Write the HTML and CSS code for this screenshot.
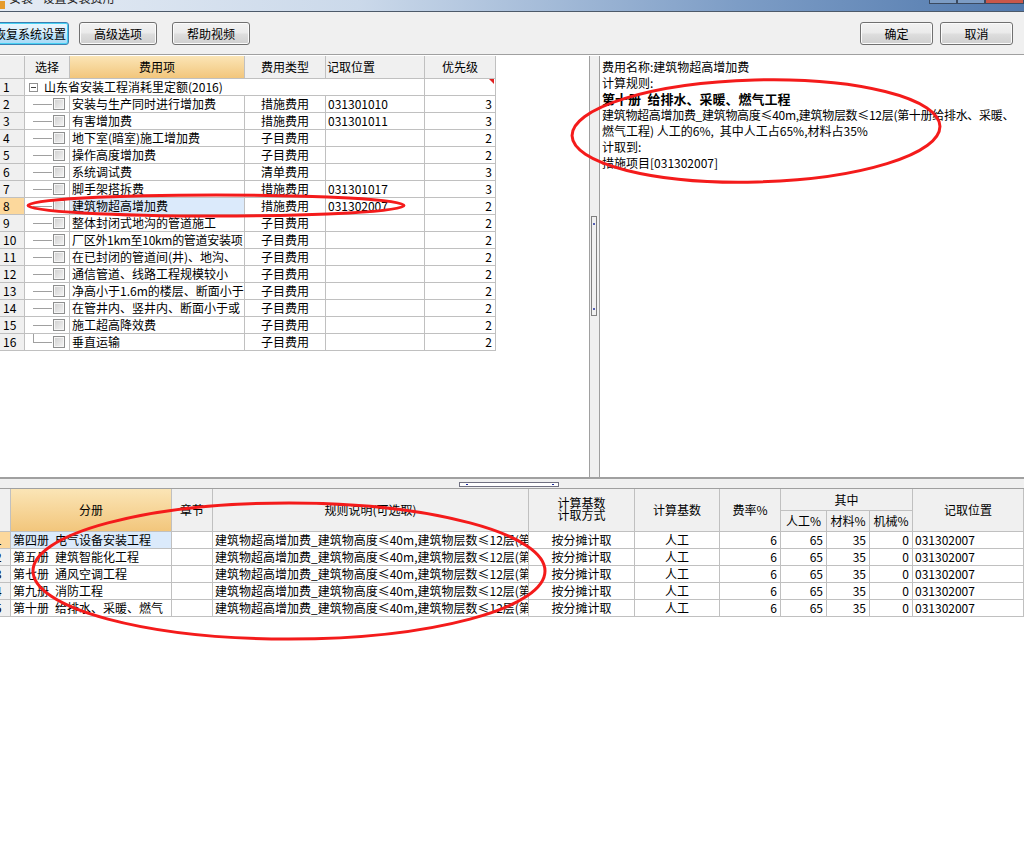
FILE: index.html
```html
<!DOCTYPE html>
<html lang="zh-CN">

<head>
    <meta charset="UTF-8" />
    <title>设置安装费用</title>
    <link rel="stylesheet" href="styles.css">
</head>

<body>
    <div class="titlebar">
        <span class="app-icon"></span>
        <span class="title-text">安装 - 设置安装费用</span>
        <div class="caption-btns"><span></span><span></span><span class="close"></span></div>
    </div>

    <div class="toolbar">
        <div class="btn btn-focus btn-first">恢复系统设置</div>
        <div class="btn">高级选项</div>
        <div class="btn">帮助视频</div>
        <div class="spacer"></div>
        <div class="btn btn-sm">确定</div>
        <div class="btn btn-sm">取消</div>
    </div>

    <div class="main">
        <div class="left-pane">
            <div class="top-grid">
                <div class="c h"></div>
                <div class="c h">选择</div>
                <div class="c h orange">费用项</div>
                <div class="c h">费用类型</div>
                <div class="c h left">记取位置</div>
                <div class="c h">优先级</div>

                <div class="c n">1</div>
                <div class="c merged"><span class="minus"></span>山东省安装工程消耗里定额(2016)</div>
                <div class="c rt flag"></div>

                <div class="c n">2</div>
                <div class="c tree"><span class="branch"></span><span class="chk"></span></div>
                <div class="c">安装与生产同时进行增加费</div>
                <div class="c ctr">措施费用</div>
                <div class="c">031301010</div>
                <div class="c rt">3</div>

                <div class="c n">3</div>
                <div class="c tree"><span class="branch"></span><span class="chk"></span></div>
                <div class="c">有害增加费</div>
                <div class="c ctr">措施费用</div>
                <div class="c">031301011</div>
                <div class="c rt">3</div>

                <div class="c n">4</div>
                <div class="c tree"><span class="branch"></span><span class="chk"></span></div>
                <div class="c">地下室(暗室)施工增加费</div>
                <div class="c ctr">子目费用</div>
                <div class="c"></div>
                <div class="c rt">2</div>

                <div class="c n">5</div>
                <div class="c tree"><span class="branch"></span><span class="chk"></span></div>
                <div class="c">操作高度增加费</div>
                <div class="c ctr">子目费用</div>
                <div class="c"></div>
                <div class="c rt">2</div>

                <div class="c n">6</div>
                <div class="c tree"><span class="branch"></span><span class="chk"></span></div>
                <div class="c">系统调试费</div>
                <div class="c ctr">清单费用</div>
                <div class="c"></div>
                <div class="c rt">3</div>

                <div class="c n">7</div>
                <div class="c tree"><span class="branch"></span><span class="chk"></span></div>
                <div class="c">脚手架搭拆费</div>
                <div class="c ctr">措施费用</div>
                <div class="c">031301017</div>
                <div class="c rt">3</div>

                <div class="c n sel">8</div>
                <div class="c tree"><span class="branch"></span><span class="chk"></span></div>
                <div class="c cur">建筑物超高增加费</div>
                <div class="c ctr">措施费用</div>
                <div class="c">031302007</div>
                <div class="c rt">2</div>

                <div class="c n">9</div>
                <div class="c tree"><span class="branch"></span><span class="chk"></span></div>
                <div class="c">整体封闭式地沟的管道施工</div>
                <div class="c ctr">子目费用</div>
                <div class="c"></div>
                <div class="c rt">2</div>

                <div class="c n">10</div>
                <div class="c tree"><span class="branch"></span><span class="chk"></span></div>
                <div class="c tight">厂区外1km至10km的管道安装项</div>
                <div class="c ctr">子目费用</div>
                <div class="c"></div>
                <div class="c rt">2</div>

                <div class="c n">11</div>
                <div class="c tree"><span class="branch"></span><span class="chk"></span></div>
                <div class="c">在已封闭的管道间(井)、地沟、</div>
                <div class="c ctr">子目费用</div>
                <div class="c"></div>
                <div class="c rt">2</div>

                <div class="c n">12</div>
                <div class="c tree"><span class="branch"></span><span class="chk"></span></div>
                <div class="c">通信管道、线路工程规模较小</div>
                <div class="c ctr">子目费用</div>
                <div class="c"></div>
                <div class="c rt">2</div>

                <div class="c n">13</div>
                <div class="c tree"><span class="branch"></span><span class="chk"></span></div>
                <div class="c">净高小于1.6m的楼层、断面小于</div>
                <div class="c ctr">子目费用</div>
                <div class="c"></div>
                <div class="c rt">2</div>

                <div class="c n">14</div>
                <div class="c tree"><span class="branch"></span><span class="chk"></span></div>
                <div class="c">在管井内、竖井内、断面小于或</div>
                <div class="c ctr">子目费用</div>
                <div class="c"></div>
                <div class="c rt">2</div>

                <div class="c n">15</div>
                <div class="c tree"><span class="branch"></span><span class="chk"></span></div>
                <div class="c">施工超高降效费</div>
                <div class="c ctr">子目费用</div>
                <div class="c"></div>
                <div class="c rt">2</div>

                <div class="c n">16</div>
                <div class="c tree"><span class="branch last"></span><span class="chk"></span></div>
                <div class="c">垂直运输</div>
                <div class="c ctr">子目费用</div>
                <div class="c"></div>
                <div class="c rt">2</div>
            </div>
        </div>

        <div class="vsplit"><span class="vthumb"></span></div>

        <div class="right-pane">
            <div>费用名称:建筑物超高增加费</div>
            <div>计算规则:</div>
            <div class="rule-title">第十册&ensp;给排水、采暖、燃气工程</div>
            <div class="tight">建筑物超高增加费_建筑物高度≤40m,建筑物层数≤12层(第十册给排水、采暖、</div>
            <div>燃气工程) 人工的6%,&ensp;其中人工占65%,材料占35%</div>
            <div>计取到:</div>
            <div>措施项目[031302007]</div>
        </div>
    </div>

    <div class="hsplit"><span class="hthumb"></span></div>

    <div class="bottom-pane">
        <div class="bottom-grid">
            <div class="c h tall"></div>
            <div class="c h tall orange">分册</div>
            <div class="c h tall">章节</div>
            <div class="c h tall">规则说明(可选取)</div>
            <div class="c h tall two-line">计算基数<br>计取方式</div>
            <div class="c h tall">计算基数</div>
            <div class="c h tall">费率%</div>
            <div class="c h wide3">其中</div>
            <div class="c h tall">记取位置</div>
            <div class="c h">人工%</div>
            <div class="c h">材料%</div>
            <div class="c h">机械%</div>

            <div class="c n cut sel">1</div>
            <div class="c cur">第四册&ensp;电气设备安装工程</div>
            <div class="c"></div>
            <div class="c">建筑物超高增加费_建筑物高度≤40m,建筑物层数≤12层(第四册</div>
            <div class="c ctr">按分摊计取</div>
            <div class="c ctr">人工</div>
            <div class="c rt">6</div>
            <div class="c rt">65</div>
            <div class="c rt">35</div>
            <div class="c rt">0</div>
            <div class="c">031302007</div>

            <div class="c n cut">2</div>
            <div class="c">第五册&ensp;建筑智能化工程</div>
            <div class="c"></div>
            <div class="c">建筑物超高增加费_建筑物高度≤40m,建筑物层数≤12层(第五册</div>
            <div class="c ctr">按分摊计取</div>
            <div class="c ctr">人工</div>
            <div class="c rt">6</div>
            <div class="c rt">65</div>
            <div class="c rt">35</div>
            <div class="c rt">0</div>
            <div class="c">031302007</div>

            <div class="c n cut">3</div>
            <div class="c">第七册&ensp;通风空调工程</div>
            <div class="c"></div>
            <div class="c">建筑物超高增加费_建筑物高度≤40m,建筑物层数≤12层(第七册</div>
            <div class="c ctr">按分摊计取</div>
            <div class="c ctr">人工</div>
            <div class="c rt">6</div>
            <div class="c rt">65</div>
            <div class="c rt">35</div>
            <div class="c rt">0</div>
            <div class="c">031302007</div>

            <div class="c n cut">4</div>
            <div class="c">第九册&ensp;消防工程</div>
            <div class="c"></div>
            <div class="c">建筑物超高增加费_建筑物高度≤40m,建筑物层数≤12层(第九册</div>
            <div class="c ctr">按分摊计取</div>
            <div class="c ctr">人工</div>
            <div class="c rt">6</div>
            <div class="c rt">65</div>
            <div class="c rt">35</div>
            <div class="c rt">0</div>
            <div class="c">031302007</div>

            <div class="c n cut">5</div>
            <div class="c">第十册&ensp;给排水、采暖、燃气</div>
            <div class="c"></div>
            <div class="c">建筑物超高增加费_建筑物高度≤40m,建筑物层数≤12层(第十册</div>
            <div class="c ctr">按分摊计取</div>
            <div class="c ctr">人工</div>
            <div class="c rt">6</div>
            <div class="c rt">65</div>
            <div class="c rt">35</div>
            <div class="c rt">0</div>
            <div class="c">031302007</div>
        </div>
    </div>

    <!-- 红色圈注 -->
    <svg class="marks" width="1024" height="862" viewBox="0 0 1024 862">
        <ellipse cx="216" cy="205.5" rx="188" ry="10.5" />
        <ellipse cx="756" cy="131" rx="184" ry="51" transform="rotate(-1.5 756 131)" />
        <ellipse cx="289" cy="571" rx="256" ry="68" />
    </svg>
</body>

</html>
```

FILE: styles.css
```css
* {
    margin: 0;
    padding: 0;
    box-sizing: border-box;
}

body {
    width: 1024px;
    height: 862px;
    overflow: hidden;
    position: relative;
    background-color: #fff;
    font-family: "Noto Sans CJK SC", "Noto Sans", sans-serif;
    font-size: 12px;
    color: #000;
}

/* 标题栏，只露出下半截 */
.titlebar {
    height: 12px;
    overflow: hidden;
    display: flex;
    align-items: flex-start;
    background: linear-gradient(90deg, #e4ebf4 0%, #cbd9ea 35%, #7d9dc6 72%, #5179ad 100%);
    border-bottom: 1px solid #4d5a6a;
}

.app-icon {
    width: 5px;
    height: 8px;
    margin-top: 1px;
    background-color: #e59b2c;
}

.title-text {
    margin-left: 4px;
    margin-top: -12px;
    line-height: 20px;
    color: #1e1e1e;
}

.caption-btns {
    margin-left: auto;
    display: flex;
}

.caption-btns span {
    width: 28px;
    height: 4px;
    border: 1px solid #3b4a60;
    border-top: none;
    background: #7c9cc4;
}

.caption-btns .close {
    width: 39px;
    background: #c8574a;
}

/* 工具栏 */
.toolbar {
    height: 43px;
    display: flex;
    align-items: flex-start;
    padding-top: 10px;
    padding-right: 11px;
    background-color: #f0f0f0;
    border-bottom: 1px solid #a0a0a0;
}

.btn {
    width: 78px;
    height: 23px;
    line-height: 21px;
    text-align: center;
    border: 1px solid #707070;
    border-radius: 3px;
    background: linear-gradient(#f2f2f2 0%, #ebebeb 45%, #dddddd 55%, #cfcfcf 100%);
    box-shadow: inset 0 0 0 1px #fbfbfb;
    margin-right: 15px;
}

.btn-first {
    margin-left: -9px;
    margin-right: 10px;
}

.btn-focus {
    border-color: #3c7fb1;
    background: linear-gradient(#eaf6fd 0%, #d9f0fc 45%, #bee6fd 55%, #a7d9f5 100%);
    box-shadow: inset 0 0 0 1px #48d1f3;
}

.spacer {
    flex: 1;
}

.btn-sm {
    width: 73px;
    margin-right: 7px;
}

.btn-sm:last-child {
    margin-right: 0;
}

/* 上半部分 */
.main {
    height: 422px;
    display: flex;
    padding-top: 1px;
}

.left-pane {
    width: 589px;
}

.vsplit {
    width: 11px;
    background-color: #f0f0f0;
    border-left: 1px solid #a0a0a0;
    border-right: 1px solid #a0a0a0;
    padding-top: 160px;
    padding-left: 1px;
}

.vthumb {
    display: block;
    width: 6px;
    height: 100px;
    border: 1px solid #808080;
    background: radial-gradient(circle at 50% 7px, #1c2b9c 0.6px, transparent 1px),
        radial-gradient(circle at 50% 92px, #1c2b9c 0.6px, transparent 1px);
}

.right-pane {
    flex: 1;
    padding: 3px 0 0 2px;
    line-height: 16px;
    white-space: nowrap;
    overflow: hidden;
}

.rule-title {
    font-weight: bold;
    font-size: 13px;
}

/* 表格公用 */
.top-grid,
.bottom-grid {
    display: grid;
}

.top-grid {
    grid-template-columns: 25px 45px 175px 81px 99px 71px;
    grid-template-rows: 23px;
    grid-auto-rows: 17px;
    width: 496px;
}

.bottom-grid {
    grid-template-columns: 11px 161px 41px 316px 106px 85px 61px 46px 43px 43px 111px;
    grid-template-rows: 22px 21px;
    grid-auto-rows: 17px;
}

.c {
    border-right: 1px solid #c0c0c0;
    border-bottom: 1px solid #c0c0c0;
    line-height: 16px;
    padding: 0 2px;
    white-space: nowrap;
    overflow: hidden;
}

.tight {
    letter-spacing: -0.3px;
}

.h {
    background-color: #f0f0f0;
    display: flex;
    align-items: center;
    justify-content: center;
}

.h.left {
    justify-content: flex-start;
    padding-left: 1px;
}

.orange {
    background: linear-gradient(#fbe5b6, #f2c67c);
}

.tall {
    grid-row: span 2;
}

.wide3 {
    grid-column: span 3;
}

.two-line {
    line-height: 12px;
    text-align: center;
    padding-bottom: 2px;
}

.n {
    background-color: #f0f0f0;
    padding-left: 3px;
}

.n.cut {
    padding-left: 0;
    text-indent: -5px;
}

.n.sel {
    background-color: #fcd89c;
}

.cur {
    background-color: #dbeafb;
}

.ctr {
    text-align: center;
}

.rt {
    text-align: right;
    padding-right: 3px;
}

/* 第一行：树的根节点 */
.merged {
    grid-column: span 4;
    display: flex;
    align-items: center;
    padding-left: 4px;
}

.minus {
    width: 9px;
    height: 9px;
    border: 1px solid #919191;
    margin-right: 6px;
    background: linear-gradient(#444, #444) center / 5px 1px no-repeat, #fff;
}

.flag {
    position: relative;
}

.flag::after {
    content: "";
    position: absolute;
    top: 0;
    right: 1px;
    border-top: 5px solid #e02020;
    border-left: 5px solid transparent;
}

.tree {
    display: flex;
    align-items: center;
    padding-left: 8px;
}

.branch {
    width: 19px;
    height: 1px;
    background-color: #a0a0a0;
    margin-right: 1px;
}

.branch.last {
    align-self: flex-start;
    height: 9px;
    background: none;
    border-left: 1px solid #a0a0a0;
    border-bottom: 1px solid #a0a0a0;
}

.chk {
    width: 12px;
    height: 12px;
    border: 1px solid #8e8f8f;
    background: linear-gradient(135deg, #cfcfcf, #f4f4f4);
    box-shadow: inset 0 0 0 1px #f6f6f6;
}

/* 上下分隔条 */
.hsplit {
    height: 12px;
    background-color: #f0f0f0;
    border-top: 2px solid #a0a0a0;
    border-bottom: 1px solid #a0a0a0;
    padding-top: 3px;
    padding-left: 459px;
}

.hthumb {
    display: block;
    width: 100px;
    height: 5px;
    border: 1px solid #707080;
    background: radial-gradient(circle at 7px 50%, #1c2b9c 0.6px, transparent 1px),
        radial-gradient(circle at 93px 50%, #1c2b9c 0.6px, transparent 1px), #fff;
}

/* 红色手绘圈 */
.marks {
    position: absolute;
    left: 0;
    top: 0;
    pointer-events: none;
}

.marks ellipse {
    fill: none;
    stroke: #f41b1b;
    stroke-width: 3;
}
```
